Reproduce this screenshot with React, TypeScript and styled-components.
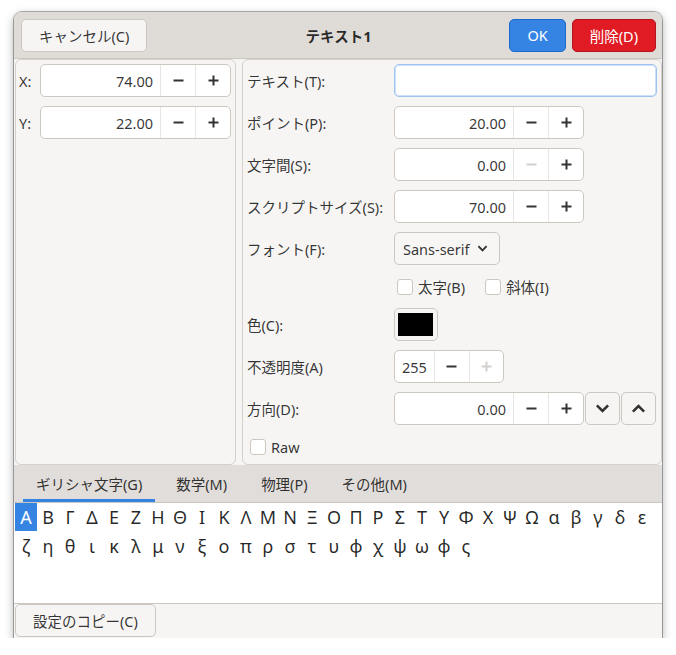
import React from 'react';
import styled, { createGlobalStyle, css } from 'styled-components';

const GlobalStyle = createGlobalStyle`
    html, body {
        margin: 0;
        background: #ffffff;
    }
    body {
        font-family: "Noto Sans", "Noto Sans CJK JP", sans-serif;
        font-size: 14.5px;
        color: rgba(0, 0, 0, 0.8);
    }
    #root {
        padding: 12px 0 0 14px;
    }
`;

const Window = styled.div`
    width: 648px;
    height: 626px;
    display: flex;
    flex-direction: column;
    background: #f6f5f4;
    border-radius: 8px 8px 0 0;
    box-shadow: 0 0 0 1px rgba(0, 0, 0, 0.3), 0 3px 9px 1px rgba(0, 0, 0, 0.28);
    overflow: hidden;
`;

const HeaderBar = styled.div`
    height: 46px;
    flex: none;
    display: grid;
    grid-template-columns: 1fr auto 1fr;
    align-items: center;
    padding: 0 6px 0 7px;
    background: #dfdcd8;
    border-bottom: 1px solid #cdc7c2;
`;

const HeaderSide = styled.div<{ $end?: boolean }>`
    display: flex;
    gap: 6px;
    justify-content: ${(p) => (p.$end ? 'flex-end' : 'flex-start')};
`;

const Title = styled.div`
    font-weight: bold;
    font-size: 14.5px;
    color: rgba(0, 0, 0, 0.82);
`;

type Variant = 'default' | 'suggested' | 'destructive';

const Button = styled.button<{ $variant?: Variant }>`
    height: 33px;
    padding: 0 17px;
    border-radius: 5px;
    font: inherit;
    font-size: 14.5px;
    cursor: pointer;
    ${(p) => {
        if (p.$variant === 'suggested') {
            return css`
                background: #3584e4;
                border: 1px solid #1b6acb;
                color: #ffffff;
            `;
        }
        if (p.$variant === 'destructive') {
            return css`
                background: #e01b24;
                border: 1px solid #b2161d;
                color: #ffffff;
            `;
        }
        return css`
            background: #f6f5f4;
            border: 1px solid #cdc7c2;
            color: rgba(0, 0, 0, 0.8);
        `;
    }}
`;

const Body = styled.div`
    height: 406px;
    flex: none;
    display: flex;
    gap: 6px;
    padding-left: 1px;
`;

const Frame = styled.div<{ $width?: number; $padX: number }>`
    ${(p) => (p.$width ? `width: ${p.$width}px; flex: none;` : 'flex: 1;')}
    border: 1px solid #d5d0cc;
    border-radius: 6px;
    padding: 4px 4px 4px ${(p) => p.$padX}px;
    box-sizing: border-box;
`;

const FormGrid = styled.div<{ $labelWidth: number }>`
    display: grid;
    grid-template-columns: ${(p) => p.$labelWidth}px 1fr;
    row-gap: 9px;
    align-items: center;
`;

const Label = styled.div`
    white-space: nowrap;
`;

const Field = styled.div`
    display: flex;
    align-items: center;
    gap: 1px;
`;

const SpinWrap = styled.div<{ $width?: number }>`
    ${(p) => (p.$width ? `width: ${p.$width}px;` : 'flex: 1;')}
    height: 33px;
    box-sizing: border-box;
    display: flex;
    background: #ffffff;
    border: 1px solid #cdc7c2;
    border-radius: 5px;
`;

const SpinValue = styled.div`
    flex: 1;
    display: flex;
    align-items: center;
    justify-content: flex-end;
    padding: 0 7px;
`;

const SpinStep = styled.div<{ $disabled?: boolean }>`
    width: 35px;
    flex: none;
    box-sizing: border-box;
    border-left: 1px solid #e8e6e3;
    display: flex;
    align-items: center;
    justify-content: center;
    color: ${(p) => (p.$disabled ? '#d3d0cd' : 'rgba(0, 0, 0, 0.8)')};
`;

const TextEntry = styled.div`
    height: 33px;
    box-sizing: border-box;
    background: #ffffff;
    border: 1px solid #9fc3f0;
    box-shadow: inset 0 0 0 1px rgba(53, 132, 228, 0.25);
    border-radius: 5px;
`;

const DropDown = styled.div`
    width: 106px;
    height: 33px;
    box-sizing: border-box;
    display: flex;
    align-items: center;
    gap: 7px;
    padding: 0 8px;
    background: #f7f6f5;
    border: 1px solid #cdc7c2;
    border-radius: 5px;
`;

const IconButton = styled.div`
    width: 35px;
    height: 33px;
    box-sizing: border-box;
    display: flex;
    align-items: center;
    justify-content: center;
    background: #f6f5f4;
    border: 1px solid #cdc7c2;
    border-radius: 5px;
`;

const CheckRow = styled.div`
    height: 25px;
    display: flex;
    align-items: center;
    padding-left: 3px;
    gap: 20px;
`;

const Check = styled.label`
    display: flex;
    align-items: center;
    gap: 5px;
`;

const CheckBox = styled.span`
    width: 16px;
    height: 16px;
    box-sizing: border-box;
    background: #ffffff;
    border: 1px solid #cdc7c2;
    border-radius: 3px;
`;

const ColorButton = styled.div`
    width: 44px;
    height: 33px;
    box-sizing: border-box;
    padding: 4px 4px 4px 3px;
    background: #f6f5f4;
    border: 1px solid #cdc7c2;
    border-radius: 5px;
`;

const Swatch = styled.div<{ $color: string }>`
    width: 100%;
    height: 100%;
    background: ${(p) => p.$color};
`;

const TabBar = styled.div`
    height: 37px;
    flex: none;
    display: flex;
    gap: 8px;
    padding-left: 9px;
    background: #e0ddda;
    border-bottom: 1px solid #cdc7c2;
`;

const Tab = styled.div<{ $active?: boolean }>`
    display: flex;
    align-items: center;
    padding: 3px 13px 0;
    border-bottom: 3px solid ${(p) => (p.$active ? '#3584e4' : 'transparent')};
`;

const CharGrid = styled.div`
    height: 100px;
    flex: none;
    display: flex;
    flex-wrap: wrap;
    align-content: flex-start;
    row-gap: 1px;
    padding-left: 1px;
    background: #ffffff;
    border-bottom: 1px solid #cdc7c2;
    font-size: 18px;
`;

const CharCell = styled.div<{ $selected?: boolean }>`
    width: 22px;
    height: 28px;
    display: flex;
    align-items: center;
    justify-content: center;
    background: ${(p) => (p.$selected ? '#3584e4' : 'transparent')};
    color: ${(p) => (p.$selected ? '#ffffff' : 'rgba(0, 0, 0, 0.85)')};
`;

const Footer = styled.div`
    flex: 1;
    display: flex;
    align-items: flex-start;
    padding-left: 1px;
`;

const Minus = () => (
    <svg width="11" height="11" viewBox="0 0 11 11">
        <path d="M0.5 5.5 H10.5" stroke="currentColor" strokeWidth="2" />
    </svg>
);

const Plus = () => (
    <svg width="11" height="11" viewBox="0 0 11 11">
        <path d="M0.5 5.5 H10.5 M5.5 0.5 V10.5" stroke="currentColor" strokeWidth="2" />
    </svg>
);

const Chevron = ({ up, size }: { up?: boolean; size: number }) => (
    <svg width={size} height={size} viewBox="0 0 12 12">
        <path
            d={up ? 'M1.5 8.5 L6 4 L10.5 8.5' : 'M1.5 3.5 L6 8 L10.5 3.5'}
            fill="none"
            stroke="rgba(0,0,0,0.8)"
            strokeWidth="2"
        />
    </svg>
);

interface SpinProps {
    value: string;
    width?: number;
    minusDisabled?: boolean;
    plusDisabled?: boolean;
}

function Spin(props: SpinProps) {
    return (
        <SpinWrap $width={props.width}>
            <SpinValue>{props.value}</SpinValue>
            <SpinStep $disabled={props.minusDisabled}><Minus /></SpinStep>
            <SpinStep $disabled={props.plusDisabled}><Plus /></SpinStep>
        </SpinWrap>
    );
}

const greek = [
    'Α', 'Β', 'Γ', 'Δ', 'Ε', 'Ζ', 'Η', 'Θ', 'Ι', 'Κ', 'Λ', 'Μ', 'Ν', 'Ξ', 'Ο', 'Π', 'Ρ', 'Σ', 'Τ', 'Υ', 'Φ', 'Χ', 'Ψ', 'Ω',
    'α', 'β', 'γ', 'δ', 'ε', 'ζ', 'η', 'θ', 'ι', 'κ', 'λ', 'μ', 'ν', 'ξ', 'ο', 'π', 'ρ', 'σ', 'τ', 'υ', 'φ', 'χ', 'ψ', 'ω', 'ϕ', 'ς',
];

const tabs = ['ギリシャ文字(G)', '数学(M)', '物理(P)', 'その他(M)'];

function App() {
    return (
        <>
            <GlobalStyle />
            <Window>
                <HeaderBar>
                    <HeaderSide>
                        <Button>キャンセル(C)</Button>
                    </HeaderSide>
                    <Title>テキスト1</Title>
                    <HeaderSide $end>
                        <Button $variant="suggested">OK</Button>
                        <Button $variant="destructive">削除(D)</Button>
                    </HeaderSide>
                </HeaderBar>

                <Body>
                    <Frame $width={221} $padX={3}>
                        <FormGrid $labelWidth={21}>
                            <Label>X:</Label>
                            <Spin value="74.00" />
                            <Label>Y:</Label>
                            <Spin value="22.00" />
                        </FormGrid>
                    </Frame>

                    <Frame $padX={4}>
                        <FormGrid $labelWidth={147}>
                            <Label>テキスト(T):</Label>
                            <TextEntry />
                            <Label>ポイント(P):</Label>
                            <Field><Spin value="20.00" width={190} /></Field>
                            <Label>文字間(S):</Label>
                            <Field><Spin value="0.00" width={190} minusDisabled /></Field>
                            <Label>スクリプトサイズ(S):</Label>
                            <Field><Spin value="70.00" width={190} /></Field>
                            <Label>フォント(F):</Label>
                            <Field>
                                <DropDown>
                                    Sans-serif
                                    <Chevron size={11} />
                                </DropDown>
                            </Field>
                            <div />
                            <CheckRow>
                                <Check><CheckBox />太字(B)</Check>
                                <Check><CheckBox />斜体(I)</Check>
                            </CheckRow>
                            <Label>色(C):</Label>
                            <Field>
                                <ColorButton><Swatch $color="#000000" /></ColorButton>
                            </Field>
                            <Label>不透明度(A)</Label>
                            <Field><Spin value="255" width={110} plusDisabled /></Field>
                            <Label>方向(D):</Label>
                            <Field>
                                <Spin value="0.00" width={190} />
                                <IconButton><Chevron size={15} /></IconButton>
                                <IconButton><Chevron size={15} up /></IconButton>
                            </Field>
                            <CheckRow>
                                <Check><CheckBox />Raw</Check>
                            </CheckRow>
                        </FormGrid>
                    </Frame>
                </Body>

                <TabBar>
                    {tabs.map((t, i) => (
                        <Tab key={t} $active={i === 0}>{t}</Tab>
                    ))}
                </TabBar>

                <CharGrid>
                    {greek.map((c, i) => (
                        <CharCell key={c + i} $selected={i === 0}>{c}</CharCell>
                    ))}
                </CharGrid>

                <Footer>
                    <Button>設定のコピー(C)</Button>
                </Footer>
            </Window>
        </>
    );
}

export default App;
